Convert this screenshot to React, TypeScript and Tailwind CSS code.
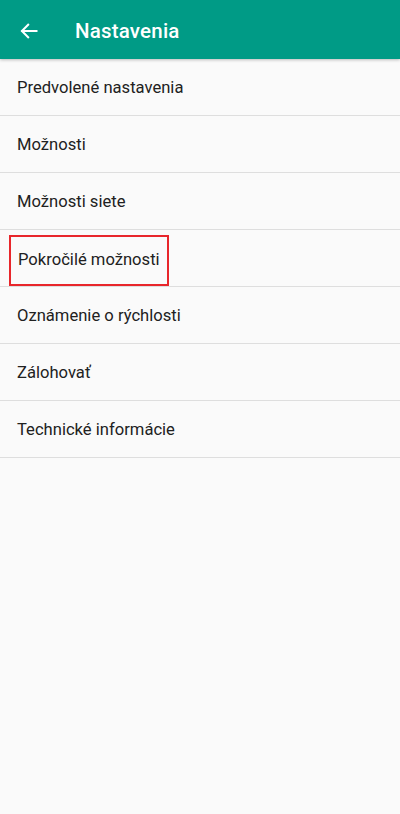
const items = [
  'Predvolené nastavenia',
  'Možnosti',
  'Možnosti siete',
  'Pokročilé možnosti',
  'Oznámenie o rýchlosti',
  'Zálohovať',
  'Technické informácie',
];

const App = () => {
  return (
    <div className="min-h-[814px] bg-[#fafafa] font-['Roboto',sans-serif]">
      {/* Toolbar */}
      <div className="h-[59px] pt-[3px] bg-[#009b86] flex items-center shadow-[0_1px_3px_rgba(0,0,0,0.25)] relative z-10">
        <div className="w-[60px] pl-[19px] flex items-center">
          <svg width="20" height="20" viewBox="0 0 24 24" fill="none" stroke="white" strokeWidth="2.4" strokeLinecap="square">
            <path d="M21 12H4" />
            <path d="M11 4.5L3.5 12L11 19.5" />
          </svg>
        </div>
        <h1 className="ml-[15px] text-[20.5px] font-medium text-white tracking-[0.2px]">Nastavenia</h1>
      </div>

      <ul>
        {items.map((item, i) =>
          i === 3 ? (
            <li key={i} className="h-[57px] border-b border-[#dedede] flex items-end px-[9px]">
              <span className="h-[51px] flex items-center px-[7px] border-2 border-[#e8262b] text-[16.6px] text-[#212121]">
                {item}
              </span>
            </li>
          ) : (
            <li key={i} className="h-[57px] border-b border-[#dedede] flex items-center pt-[3px] px-[9px]">
              <span className="px-[8px] text-[16.6px] text-[#212121]">{item}</span>
            </li>
          )
        )}
      </ul>
    </div>
  );
};

export default App;
